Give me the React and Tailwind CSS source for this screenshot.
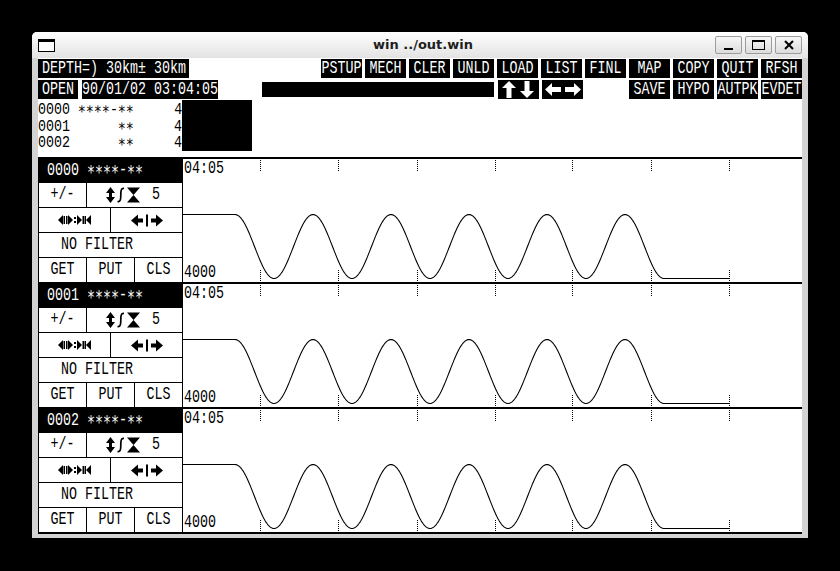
import React from 'react';

const TICKS = [77, 155, 234, 312, 389, 468, 546];

// trace of one channel, in plot coordinates (619 x 123)
function wavePath() {
  let d = 'M0 55.5 L52 55.5';
  for (let x = 53; x <= 481; x++) {
    const y = 87.5 - 32 * Math.cos((2 * Math.PI * (x - 52)) / 78);
    d += ` L${x} ${y.toFixed(2)}`;
  }
  d += ' L546 119.5';
  return d;
}
const WAVE = wavePath();

// tall narrow text like the old bitmap font
function T({ children, className = '' }) {
  return <span className={`inline-block whitespace-pre leading-[10px] scale-y-[1.38] ${className}`}>{children}</span>;
}

function Btn({ label, children, className = 'w-[41px]' }) {
  return (
    <div className={`h-[19px] bg-black text-white flex items-center justify-center ${className}`}>
      {children || <T>{label}</T>}
    </div>
  );
}

function UpDown() {
  return (
    <svg width="34" height="17" viewBox="0 0 34 17" fill="white">
      <polygon points="0,7 7,0 14,7" />
      <rect x="4.5" y="7" width="5" height="10" />
      <rect x="22.5" y="0" width="5" height="10" />
      <polygon points="18,10 32,10 25,17" />
    </svg>
  );
}

function LeftRight() {
  return (
    <svg width="36" height="13" viewBox="0 0 36 13" fill="white">
      <polygon points="0,6.5 7,0 7,13" />
      <rect x="7" y="4" width="9" height="5" />
      <rect x="20" y="4" width="9" height="5" />
      <polygon points="29,0 36,6.5 29,13" />
    </svg>
  );
}

function VIcon() {
  return (
    <svg width="36" height="16" viewBox="0 0 36 16">
      <path d="M0 6 L4.5 0 L9 6 L6 6 L6 10 L9 10 L4.5 16 L0 10 L3 10 L3 6 Z" fill="black" />
      <path d="M18 1.5 C15 1 14.8 4 14.8 8 C14.8 12 14.6 15 11.5 14.5" stroke="black" strokeWidth="1.7" fill="none" />
      <path d="M21 0.5 H34 L27.5 8 L34 15.5 H21 L27.5 8 Z" fill="black" />
    </svg>
  );
}

function HIconA() {
  return (
    <svg width="33" height="12" viewBox="0 0 33 12" fill="black">
      <polygon points="0,6 5,1 5,11" />
      <rect x="5.5" y="2" width="1.5" height="8" />
      <rect x="8" y="2" width="1.5" height="8" />
      <polygon points="15,6 10,1 10,11" />
      <rect x="16" y="3" width="2" height="2" />
      <rect x="16" y="7" width="2" height="2" />
      <polygon points="19,1 24,6 19,11" />
      <rect x="24.5" y="2" width="1.5" height="8" />
      <polygon points="33,1 28,6 33,11" />
      <rect x="26.5" y="2" width="1.5" height="8" />
    </svg>
  );
}

function HIconB() {
  return (
    <svg width="32" height="13" viewBox="0 0 32 13" fill="black">
      <polygon points="0,6.5 7,0.5 7,12.5" />
      <rect x="7" y="4.5" width="5" height="4" />
      <rect x="15" y="0.5" width="2" height="12" />
      <rect x="20" y="4.5" width="5" height="4" />
      <polygon points="25,0.5 32,6.5 25,12.5" />
    </svg>
  );
}

function Channel({ id }) {
  return (
    <div className="flex flex-col">
      <div className="h-[2px] bg-black" />
      <div className="flex h-[123px]">
        <div className="w-[145px] flex flex-col border-x border-black">
          <div className="h-[23px] bg-black text-white pl-[8px] flex items-center">
            <T>{`${id} ∗∗∗∗-∗∗`}</T>
          </div>
          <div className="h-[25px] border-t border-black flex">
            <div className="w-[48px] border-r border-black flex items-center justify-center">
              <T>+/-</T>
            </div>
            <div className="flex-1 flex items-center pl-[19px]">
              <VIcon />
              <T className="ml-[10px]">5</T>
            </div>
          </div>
          <div className="h-[25px] border-t border-black flex">
            <div className="w-[72px] border-r border-black flex items-center justify-center">
              <HIconA />
            </div>
            <div className="flex-1 flex items-center justify-center">
              <HIconB />
            </div>
          </div>
          <div className="h-[25px] border-t border-black flex items-center pl-[22px]">
            <T>NO FILTER</T>
          </div>
          <div className="h-[25px] border-t border-black flex">
            <div className="w-[48px] border-r border-black flex items-center justify-center">
              <T>GET</T>
            </div>
            <div className="w-[48px] border-r border-black flex items-center justify-center">
              <T>PUT</T>
            </div>
            <div className="flex-1 flex items-center justify-center">
              <T>CLS</T>
            </div>
          </div>
        </div>
        <div className="relative flex-1 flex flex-col justify-between pl-[1px]">
          <svg className="absolute inset-0" width="619" height="123" viewBox="0 0 619 123">
            {TICKS.map((x) => (
              <g key={x} stroke="black" strokeWidth="1" strokeDasharray="1 1">
                <line x1={x + 0.5} y1="1" x2={x + 0.5} y2="12" />
                <line x1={x + 0.5} y1="111" x2={x + 0.5} y2="123" />
              </g>
            ))}
            <path d={WAVE} fill="none" stroke="black" strokeWidth="1.1" />
          </svg>
          <div className="relative h-[19px] flex items-center">
            <T>04:05</T>
          </div>
          <div className="relative h-[19px] flex items-center">
            <T>4000</T>
          </div>
        </div>
      </div>
    </div>
  );
}

function WinBtn({ children }) {
  return (
    <div className="w-[27px] h-[18px] border border-[#9c9c9c] rounded-[2px] bg-gradient-to-b from-[#f7f7f7] to-[#dcdcdc] flex items-center justify-center">
      {children}
    </div>
  );
}

export default function App() {
  return (
    <div className="w-[840px] h-[571px] bg-black pt-[32px] pl-[32px]">
      <div className="w-[776px] h-[506px] bg-[#d3d3d3] rounded-t-[5px] flex flex-col pb-[4px]">
        <div className="h-[26px] shrink-0 grid grid-cols-[1fr_auto_1fr] items-center px-[6px] rounded-t-[5px] bg-gradient-to-b from-white to-[#e3e3e3]">
          <div className="w-[17px] h-[13px] border border-black border-t-[3px] bg-white" />
          <div className="font-['DejaVu_Sans',sans-serif] font-bold text-[13px] text-[#1e1e1e] pl-[6px]">win ../out.win</div>
          <div className="flex justify-end gap-[3px]">
            <WinBtn>
              <div className="w-[9px] h-[2px] bg-black mt-[8px]" />
            </WinBtn>
            <WinBtn>
              <div className="w-[13px] h-[10px] border border-black border-t-2" />
            </WinBtn>
            <WinBtn>
              <svg width="10" height="10" viewBox="0 0 10 10">
                <path d="M1 1 L9 9 M9 1 L1 9" stroke="black" strokeWidth="2" />
              </svg>
            </WinBtn>
          </div>
        </div>

        <div className="flex-1 mx-[6px] bg-white flex flex-col font-['Liberation_Mono','DejaVu_Sans_Mono',monospace] text-[13.33px] text-black">
          <div className="flex h-[19px] mt-[1px]">
            <Btn className="w-[151px] justify-start pl-[4px]">
              <T>DEPTH=) 30km± 30km</T>
            </Btn>
            <div className="ml-auto flex gap-[3px]">
              {['PSTUP', 'MECH', 'CLER', 'UNLD', 'LOAD', 'LIST', 'FINL', 'MAP', 'COPY', 'QUIT', 'RFSH'].map((l) => (
                <Btn key={l} label={l} />
              ))}
            </div>
          </div>

          <div className="flex h-[19px] mt-[2px] items-center">
            <Btn className="w-[40px]" label="OPEN" />
            <Btn className="w-[136px] ml-[4px]" label="90/01/02 03:04:05" />
            <div className="w-[232px] h-[15px] ml-[44px] bg-black" />
            <Btn className="w-[41px] ml-[4px]">
              <UpDown />
            </Btn>
            <Btn className="w-[41px] ml-[3px]">
              <LeftRight />
            </Btn>
            <div className="ml-auto flex gap-[3px]">
              {['SAVE', 'HYPO', 'AUTPK', 'EVDET'].map((l) => (
                <Btn key={l} label={l} />
              ))}
            </div>
          </div>

          <div className="flex mt-[1px] h-[51px]">
            <div className="w-[144px] h-[51px] pt-[3px] flex items-center">
              <span className="inline-block whitespace-pre leading-[14.17px] scale-y-[1.2]">
                {'0000 ∗∗∗∗-∗∗     4\n0001      ∗∗     4\n0002      ∗∗     4'}
              </span>
            </div>
            <div className="w-[70px] h-[51px] bg-black" />
          </div>

          <div className="mt-[6px] flex flex-col">
            <Channel id="0000" />
            <Channel id="0001" />
            <Channel id="0002" />
            <div className="h-[2px] bg-black" />
          </div>
        </div>
      </div>
    </div>
  );
}
